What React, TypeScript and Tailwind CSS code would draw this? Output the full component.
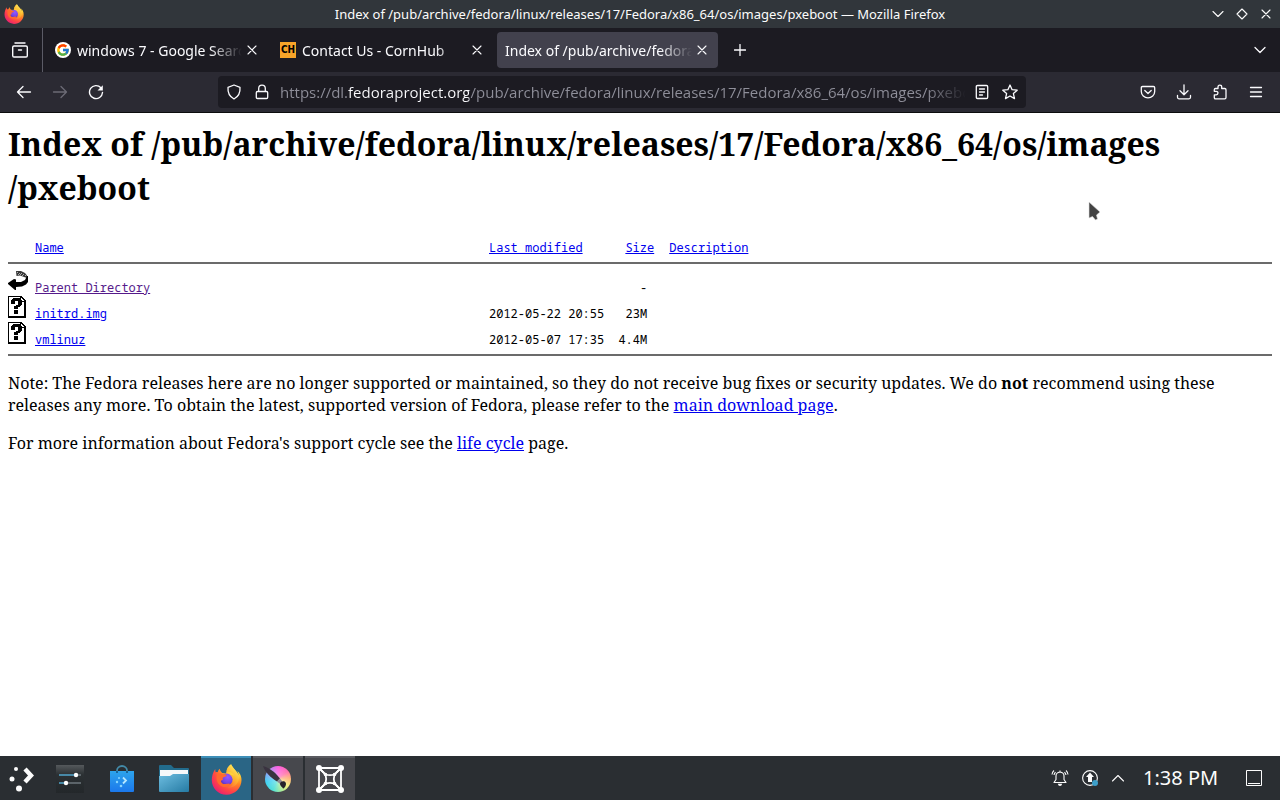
import React from "react";
import { FcGoogle } from "react-icons/fc";

type IconProps = { className?: string };

function Line({ d, size = 16, width = 1.3, className = "" }: { d: string; size?: number; width?: number; className?: string }) {
  return (
    <svg viewBox={`0 0 ${size} ${size}`} width={size} height={size} fill="none" stroke="currentColor" strokeWidth={width} strokeLinecap="round" strokeLinejoin="round" className={`shrink-0 ${className}`} aria-hidden="true">
      <path d={d} />
    </svg>
  );
}

function Firefox({ className = "", id }: IconProps & { id: string }) {
  return (
    <svg viewBox="0 0 32 32" className={`shrink-0 ${className}`} aria-hidden="true">
      <defs>
        <radialGradient id={`${id}-body`} cx="0.82" cy="0.12" r="1.02">
          <stop offset="0" stopColor="#fff44f" />
          <stop offset="0.3" stopColor="#ffcb36" />
          <stop offset="0.52" stopColor="#ff8a24" />
          <stop offset="0.76" stopColor="#ff4545" />
          <stop offset="1" stopColor="#e81e74" />
        </radialGradient>
        <radialGradient id={`${id}-orb`} cx="0.6" cy="0.3" r="0.8">
          <stop offset="0" stopColor="#9059ff" />
          <stop offset="0.6" stopColor="#7542e5" />
          <stop offset="1" stopColor="#4b2aa5" />
        </radialGradient>
        <linearGradient id={`${id}-flame`} x1="0.8" y1="0" x2="0.3" y2="1">
          <stop offset="0" stopColor="#fff36a" />
          <stop offset="0.55" stopColor="#ffb52e" />
          <stop offset="1" stopColor="#ff7139" />
        </linearGradient>
      </defs>
      <path d="M30.3 11.2c-.7-1.7-2.1-3.5-3.2-4.1.9 1.8 1.4 3.5 1.6 4.8C26.9 7.4 23.8 5.6 21.5 1.7c-.4-.6-.6-1.1-.7-1.5-3 1.8-4.5 5-4.8 7.300l-.6 2.200-3.800-.5c-1.300-.7-2.400-2.600-2.500-4.200-.8.6-1.900 2-2.100 3.500-.8-.2-1.500-.2-2.100 0-.3-.5-.5-2.100-.5-3.400C2 8.100.8 13 .8 16.500.8 25 7.600 31.800 16 31.800S31.500 25 31.500 16.600c0-1.900-.5-4-1.200-5.400z" fill={`url(#${id}-body)`} />
      <circle cx="16" cy="16" r="6.300" fill={`url(#${id}-orb)`} />
      <path d="M6.800 10c2-.9 4.500-.5 6 .7 1.500-.2 3 .3 3.300.8-.2 1.600-3.300 1.800-3.900 2.600-.4 1.500.1 2 .1 2.500-2-.3-2.500 1.600-1.500 2.800 1.800 2.200 5.500.8 7.700.6 1.200 0 1.400 1.200.5 1.800-2.500 2.400-6 2.500-9 .6C5.500 19.500 5 14 6.800 10z" fill="#ff6a2d" />
      <path d="M20.800.2c-3 1.800-4.500 5-4.800 7.300 3.500.1 6.700 2 8.200 4.900-1.200-.8-3.200-1.200-4.300-.9 5.100 2.800 4.600 12.200-2.800 12.400 7 1.500 12.400-3.900 11.600-12C26.900 7.400 23.800 5.600 21.500 1.700c-.4-.6-.6-1.100-.7-1.500z" fill={`url(#${id}-flame)`} opacity="0.9" />
    </svg>
  );
}

function BackIcon() {
  return (
    <svg viewBox="0 0 20 22" width="20" height="22" aria-label="parent directory" role="img">
      <path d="M8 1h5l4 2 2 2.500V8l-3-1-4-1.500L8.500 6z" fill="#3a3a3a" />
      <path d="M9 2.500h1M11 3.500h1M10 4.500h1M13 3.500h1M12 4.500h1M15 4.500h1M14 5.500h1M17 5.500h1" stroke="#aaa" shapeRendering="crispEdges" />
      <path d="M20 6v6l-2 2.500-4 2-6 .5v3H7l-7-6v-1l6-4 2 .5V12h5l4-2 2-4z" fill="#000" />
    </svg>
  );
}

function UnknownIcon() {
  return (
    <svg viewBox="0 0 20 22" width="20" height="22" shapeRendering="crispEdges" aria-label="file" role="img">
      <path d="M0 0h13l5 5v17H0z" fill="#000" />
      <path d="M1 1h11v5h4v14H1z" fill="#fff" />
      <path d="M13 2l3 3h-3z" fill="#fff" />
      <path d="M4 3h1V2h7v1h1v1h1v5h-1v1h-1v1h-2v2H6v-3h2V9h2V5H7v3H3V4h1zM6 14h4v4H6z" fill="#000" />
    </svg>
  );
}

function CloseButton({ label }: { label: string }) {
  return (
    <button type="button" aria-label={label} className="flex h-6 w-5 shrink-0 items-center justify-center text-[#fbfbfe]">
      <Line size={10} width={1.1} d="M1 1l8 8M9 1L1 9" />
    </button>
  );
}

function Tab({ title, icon, active = false }: { title: string; icon?: React.ReactNode; active?: boolean }) {
  return (
    <div className={`flex h-9 w-[221px] min-w-0 items-center rounded pr-1.5 pl-2 ${active ? "bg-[#42414d]" : ""}`}>
      <button type="button" role="tab" aria-selected={active} className="flex h-full min-w-0 flex-1 items-center gap-1.5 text-left">
        {icon}
        <span className="min-w-0 flex-1 overflow-hidden whitespace-nowrap [mask-image:linear-gradient(to_left,transparent,black_32px)]">{title}</span>
      </button>
      <CloseButton label={`Close ${title}`} />
    </div>
  );
}

function NavButton({ label, children, className = "" }: { label: string; children: React.ReactNode; className?: string }) {
  return (
    <button type="button" aria-label={label} className={`flex h-8 w-9 shrink-0 items-center justify-center ${className}`}>
      {children}
    </button>
  );
}

function TitleBar() {
  return (
    <header className="flex h-7 items-center bg-[#31363b] text-[13px] text-[#fcfcfc]">
      <div className="flex w-20 pl-1">
        <Firefox id="title" className="h-5 w-5" />
      </div>
      <h2 className="min-w-0 flex-1 truncate text-center leading-7">Index of /pub/archive/fedora/linux/releases/17/Fedora/x86_64/os/images/pxeboot — Mozilla Firefox</h2>
      <div className="flex w-20 justify-end pr-0.5">
        <button type="button" aria-label="Minimize" className="flex w-6 justify-center"><Line size={12} width={1.1} d="M1 3.500l5 5 5-5" /></button>
        <button type="button" aria-label="Maximize" className="flex w-6 justify-center"><Line size={12} width={1.1} d="M6 1l5 5-5 5-5-5z" /></button>
        <button type="button" aria-label="Close window" className="flex w-6 justify-center"><Line size={12} width={1.1} d="M2 2l8 8M10 2l-8 8" /></button>
      </div>
    </header>
  );
}

function TabBar() {
  return (
    <div className="flex h-11 items-center bg-[#1c1b22] text-[14px] text-[#fbfbfe]">
      <div className="mr-1 flex h-full w-[43px] shrink-0 items-center justify-center border-r border-[#5b5b66] pr-0.5">
        <button type="button" aria-label="Firefox View">
          <Line size={18} width={1.4} d="M4 2h10M3 5h12M3 5q-1.300 0-1.300 1.300v8.400Q1.700 16 3 16h12q1.300 0 1.300-1.300V6.300Q16.300 5 15 5M7.500 9h3" />
        </button>
      </div>
      <div role="tablist" className="flex min-w-0 gap-1">
        <Tab title="windows 7 - Google Search" icon={<span className="flex h-4 w-4 shrink-0 items-center justify-center rounded-full bg-white"><FcGoogle className="h-3.5 w-3.5" /></span>} />
        <Tab
          title="Contact Us - CornHub"
          icon={
            <span aria-hidden="true" className="flex h-4 w-4 shrink-0 items-center justify-center bg-[#f7a429] font-['DejaVu_Sans_Condensed','Liberation_Sans',sans-serif] text-[10px] leading-4 font-bold text-black">CH</span>
          }
        />
        <Tab title="Index of /pub/archive/fedora/linux" active />
      </div>
      <button type="button" aria-label="New tab" className="flex h-9 w-[43px] shrink-0 items-center justify-center"><Line size={12} d="M6 0.500v11M0.500 6h11" /></button>
      <button type="button" aria-label="List all tabs" className="ml-auto flex h-9 w-10 shrink-0 items-center justify-center"><Line size={12} d="M1 3.500l5 5 5-5" /></button>
    </div>
  );
}

function NavBar() {
  return (
    <div className="flex h-[41px] items-center border-b border-[#0c0c0d] bg-[#2b2a33] px-1.5 text-[15px] text-[#fbfbfe]">
      <NavButton label="Back"><Line d="M14.500 8h-13M7 2.500L1.500 8 7 13.500" /></NavButton>
      <NavButton label="Forward" className="text-[#6c6b76]"><Line d="M1.500 8h13M9 2.500L14.500 8 9 13.500" /></NavButton>
      <NavButton label="Reload">
        <svg viewBox="0 0 16 16" width="16" height="16" fill="none" stroke="currentColor" strokeWidth="1.400" strokeLinecap="round" aria-hidden="true">
          <path d="M12.900 3.800A6.500 6.500 0 1 0 14.500 8.500" />
          <path d="M14.800 1.200v5.300H9.500z" fill="currentColor" stroke="none" />
        </svg>
      </NavButton>
      <div className="mx-[104px] flex h-8 min-w-0 flex-1 items-center rounded bg-[#1c1b22] px-2">
        <button type="button" aria-label="Tracking protection" className="shrink-0"><Line d="M8 1l6 2.300c.4 5-.8 9-6 11.700C2.800 12.300 1.600 8.300 2 3.300z" /></button>
        <button type="button" aria-label="Connection secure" className="ml-3 shrink-0"><Line d="M3.500 7.500h9q1.200 0 1.200 1.200v4.600q0 1.200-1.200 1.200h-9q-1.200 0-1.200-1.200V8.700q0-1.200 1.200-1.200M4.700 7.500V4.500a3.300 3.300 0 0 1 6.600 0v3" /></button>
        <input
          aria-label="Address"
          type="text"
          defaultValue="https://dl.fedoraproject.org/pub/archive/fedora/linux/releases/17/Fedora/x86_64/os/images/pxeboot/"
          className="ml-2.5 min-w-0 flex-1 bg-[linear-gradient(to_right,#8f8f9a_67px,#fbfbfe_67px,#fbfbfe_189px,#8f8f9a_189px)] bg-clip-text font-['Open_Sans','Noto_Sans',sans-serif] text-transparent outline-none [mask-image:linear-gradient(to_left,transparent,black_40px)]"
        />
        <button type="button" aria-label="Reader view" className="ml-2 shrink-0"><Line d="M3.500 1.500h9q1.200 0 1.200 1.200v10.600q0 1.200-1.200 1.200h-9q-1.200 0-1.200-1.200V2.700q0-1.200 1.200-1.200M5.500 5h5M5.500 8h5M5.500 11h3" /></button>
        <button type="button" aria-label="Bookmark this page" className="ml-3 shrink-0"><Line d="M8 1l2.100 4.700 5.100.5-3.800 3.400 1.100 5L8 12l-4.500 2.600 1.100-5L.8 6.200l5.100-.5z" /></button>
      </div>
      <NavButton label="Save to Pocket"><Line d="M2.500 2.500h11q1.200 0 1.200 1.200V7.500a6.700 6.300 0 0 1-13.400 0V3.700q0-1.200 1.200-1.200M4.800 6.500L8 9.500l3.200-3" /></NavButton>
      <NavButton label="Downloads"><Line d="M8 .8v9.700M4 6.800l4 3.900 4-3.900M1.500 11.500v1.800q0 1.500 1.500 1.500h10q1.500 0 1.500-1.500v-1.800" /></NavButton>
      <NavButton label="Extensions"><Line d="M6 4.500V3a1.800 1.800 0 0 1 3.700 0v1.500h3q1.300 0 1.300 1.300v7.700q0 1.300-1.300 1.300H3.500q-1.200 0-1.200-1.300v-2.700h1.900a1.700 1.700 0 0 0 0-3.500H2.300V5.800q0-1.300 1.200-1.300z" /></NavButton>
      <NavButton label="Menu"><Line d="M2.500 3.500h11M2.500 8h11M2.500 12.500h11" /></NavButton>
    </div>
  );
}

const files = [
  { icon: <BackIcon />, name: "Parent Directory", date: "", size: "-", visited: true },
  { icon: <UnknownIcon />, name: "initrd.img", date: "2012-05-22 20:55", size: "23M", visited: false },
  { icon: <UnknownIcon />, name: "vmlinuz", date: "2012-05-07 17:35", size: "4.4M", visited: false },
];

const link = "text-[#0000ee] underline";

function Page() {
  return (
    <main className="flex-1 bg-white px-2 pt-[9px] pb-6 font-['Noto_Serif','DejaVu_Serif',serif] text-[16px] leading-[22px] text-black">
      <h1 className="text-[32px] leading-[44px] font-bold">
        Index of /pub/archive/fedora/linux/releases/17/Fedora/x86_64/os/images
        <wbr />
        <span className="whitespace-nowrap">/pxeboot</span>
      </h1>
      <table className="mt-6 w-full border-b-2 border-[#6b6b6b] text-left font-['Noto_Sans_Mono','DejaVu_Sans_Mono',monospace] text-[12px] leading-4">
        <thead>
          <tr className="h-[29px] border-b-2 border-[#6b6b6b] align-top">
            <td className="w-[27px]" />
            <th className="w-[454px] pt-1.5 font-normal"><a href="#name" className={link}>Name</a></th>
            <th className="w-[115px] pt-1.5 font-normal whitespace-nowrap"><a href="#modified" className={link}>Last modified</a></th>
            <th className="w-[50px] pt-1.5 text-right font-normal"><a href="#size" className={link}>Size</a></th>
            <th className="pt-1.5 pl-[15px] font-normal"><a href="#description" className={link}>Description</a></th>
          </tr>
        </thead>
        <tbody>
          <tr className="h-[7px]"><td colSpan={5} /></tr>
          {files.map((f) => (
            <tr key={f.name} className="h-[26px] align-bottom">
              <td className="pb-1">{f.icon}</td>
              <td><a href={`#${f.name}`} className={f.visited ? "text-[#551a8b] underline" : link}>{f.name}</a></td>
              <td className="whitespace-nowrap">{f.date}</td>
              <td className="pr-[7px] text-right">{f.size}</td>
              <td />
            </tr>
          ))}
          <tr className="h-[7px]"><td colSpan={5} /></tr>
        </tbody>
      </table>
      <p className="mt-4">
        Note: The Fedora releases here are no longer supported or maintained, so they do not receive bug fixes or security updates. We do <b>not</b> recommend using these releases any more. To obtain the latest, supported version of Fedora, please refer to the <a href="#download" className={link}>main download page</a>.
      </p>
      <p className="mt-4">
        For more information about Fedora's support cycle see the <a href="#lifecycle" className={link}>life cycle</a> page.
      </p>
    </main>
  );
}

function Task({ label, state = "idle", children }: { label: string; state?: "idle" | "open" | "active"; children: React.ReactNode }) {
  const look = {
    idle: "border-transparent",
    open: "border-[#5a5b60] bg-[#47484d]",
    active: "border-[#3d8fb8] bg-[#2a6585]",
  }[state];
  return (
    <button type="button" aria-label={label} className={`flex h-full w-[50px] items-center justify-center border-t-2 ${look}`}>
      {children}
    </button>
  );
}

function Taskbar() {
  return (
    <footer className="flex h-11 items-center bg-[#2a2e32] pr-[17px] text-[#fcfcfc]">
      <button type="button" aria-label="Application launcher" className="flex h-full w-[43px] items-center justify-center">
        <svg viewBox="1 0 26 28" width="26" height="28" aria-hidden="true">
          <g fill="#fcfcfc"><circle cx="8" cy="5" r="2" /><circle cx="4" cy="15" r="2.500" /><circle cx="11" cy="24.500" r="3" /></g>
          <path d="M17 5l6 6.500-6 6.500" fill="none" stroke="#fcfcfc" strokeWidth="4.400" />
        </svg>
      </button>
      <div className="ml-0.5 flex h-full gap-0.5">
        <Task label="System settings">
          <svg viewBox="0 0 28 28" width="28" height="28" aria-hidden="true">
            <defs><linearGradient id="set" x2="0" y2="1"><stop stopColor="#55595c" /><stop offset="0.35" stopColor="#2b3033" /><stop offset="1" stopColor="#23272a" /></linearGradient></defs>
            <path d="M0 0h28v28H0z" fill="url(#set)" />
            <path d="M3 10h16M3 18h6" stroke="#51a5cb" strokeWidth="1.500" /><path d="M20 10h5M9 18h16" stroke="#6d777d" strokeWidth="1.500" />
            <circle cx="20" cy="10" r="2.200" fill="#fff" /><circle cx="10" cy="18" r="2.200" fill="#fff" />
          </svg>
        </Task>
        <Task label="Discover">
          <svg viewBox="0 0 28 28" width="28" height="28" aria-hidden="true">
            <defs><linearGradient id="bag" x2="0" y2="1"><stop stopColor="#2da4ec" /><stop offset="1" stopColor="#1b78ec" /></linearGradient></defs>
            <path d="M9 8V5.500a5 4.500 0 0 1 10 0V8" fill="none" stroke="#438aa8" strokeWidth="1.800" />
            <path d="M2 6h24v20a1 1 0 0 1-1 1H3a1 1 0 0 1-1-1z" fill="url(#bag)" />
            <path d="M9 6v2M19 6v2" stroke="#155f95" strokeWidth="1.800" />
            <path d="M15 12.500l3 3-3 3" fill="none" stroke="#b5e7ff" strokeWidth="1.800" />
            <circle cx="11" cy="13" r="1" fill="#86d4ff" /><circle cx="9" cy="17" r="1.200" fill="#86d4ff" /><circle cx="13" cy="21" r="1.300" fill="#86d4ff" />
          </svg>
        </Task>
        <Task label="Files">
          <svg viewBox="0 0 32 28" width="32" height="28" aria-hidden="true">
            <defs><linearGradient id="folder" x2="1" y2="1"><stop stopColor="#6dbde0" /><stop offset="1" stopColor="#257aa3" /></linearGradient></defs>
            <path d="M1 1q0-1 1-1h11l3 3h14q1 0 1 1v8H1z" fill="#226b8c" />
            <path d="M2 5h28v8H2z" fill="#f5f8fa" />
            <path d="M1 11h11l3-2h16v17q0 1-1 1H2q-1 0-1-1z" fill="url(#folder)" />
          </svg>
        </Task>
        <Task label="Firefox" state="active"><Firefox id="task" className="h-[31px] w-[31px]" /></Task>
        <Task label="Krita" state="open">
          <span className="relative block h-[26px] w-[26px] rounded-full bg-[radial-gradient(circle,#ffffff66,#ffffff00_70%),conic-gradient(#ff5ce0,#ff6fae_50deg,#ffb07a_85deg,#f4ee80_125deg,#a4eb9a_165deg,#4fdfd8_205deg,#3fd0f2_255deg,#8aa2f6_300deg,#ff5ce0)]">
            <svg viewBox="0 0 26 26" className="absolute inset-0 h-full w-full overflow-visible" aria-hidden="true">
              <path d="M-2 0C4 1.500 10 6 15 12.500l-3 3C5.500 11.500 0 6-2 0z" fill="#3a3340" />
              <path d="M12 15.500l3-3 2.600 3.200-2.400 2.300z" fill="#8d8794" />
              <path d="M15 17.500c1-2.500 4.500-3 5.700-.8 1 2.300-.8 4.800-2.700 6 .2-1.500-3.200-2.200-3-5.200z" fill="#26222b" />
            </svg>
          </span>
        </Task>
        <Task label="Xorg" state="open">
          <svg viewBox="0 0 30 30" width="30" height="30" fill="none" stroke="#fff" strokeWidth="1.800" aria-hidden="true">
            <path d="M4 4h22v22H4zM4 4l7 7M26 4l-7 7M4 26l7-7M26 26l-7-7" />
            <path d="M10.500 10.500q4.500 1.400 9 0-1.400 4.500 0 9-4.500-1.400-9 0 1.400-4.500 0-9z" />
            <path d="M4 4q5 3 6 6M4 4q3 5 6 6M26 4q-5 3-6 6M26 4q-3 5-6 6M4 26q5-3 6-6M4 26q3-5 6-6M26 26q-5-3-6-6M26 26q-3-5-6-6" strokeWidth="1" />
            <g fill="#fff" stroke="none"><circle cx="4" cy="4" r="3" /><circle cx="26" cy="4" r="3" /><circle cx="4" cy="26" r="3" /><circle cx="26" cy="26" r="3" /><circle cx="10.500" cy="10.500" r="1.800" /><circle cx="19.500" cy="10.500" r="1.800" /><circle cx="10.500" cy="19.500" r="1.800" /><circle cx="19.500" cy="19.500" r="1.800" /></g>
          </svg>
        </Task>
      </div>
      <div className="ml-auto flex items-center">
        <button type="button" aria-label="Notifications" className="flex w-[30px] justify-center">
          <svg viewBox="0 0 18 18" width="18" height="18" fill="none" stroke="currentColor" strokeWidth="1.100" strokeLinejoin="round" aria-hidden="true">
            <path d="M3 13.500h12l-2-3V7q0-3.500-4-4-4 .5-4 4v3.500zM9 3V1.500M1 5.500Q1.300 3 3 1.500M3 6q.3-1.500 1.500-2.800M17 5.500Q16.700 3 15 1.500M15 6q-.3-1.500-1.500-2.800" />
            <path d="M6.800 14.800h4.400q-.5 2.200-2.200 2.200t-2.200-2.200z" fill="currentColor" stroke="none" />
          </svg>
        </button>
        <button type="button" aria-label="Updates" className="flex w-[30px] justify-center">
          <svg viewBox="0 0 18 18" width="18" height="18" aria-hidden="true">
            <circle cx="9" cy="9" r="7.400" fill="none" stroke="currentColor" strokeWidth="1.100" />
            <path d="M9 3.500l4 4.500h-2v5H7V8H5z" fill="currentColor" />
            <circle cx="14" cy="14" r="3" fill="#3d9fc9" />
          </svg>
        </button>
        <button type="button" aria-label="Show hidden icons" className="flex w-[26px] justify-center"><Line size={14} width={1.1} d="M1.500 10L7 4.500l5.500 5.500" /></button>
        <time className="ml-3 w-[76px] text-xl whitespace-nowrap">1:38 PM</time>
        <button type="button" aria-label="Show desktop" className="ml-6 flex w-5 justify-end">
          <svg viewBox="0 0 18 18" width="18" height="18" fill="none" stroke="currentColor" aria-hidden="true"><path d="M1.500 1.500h15v15h-15zM3 14.500h12" /></svg>
        </button>
      </div>
    </footer>
  );
}

export default function App() {
  return (
    <div className="relative flex min-h-screen flex-col overflow-hidden font-['Noto_Sans',sans-serif]">
      <TitleBar />
      <TabBar />
      <NavBar />
      <Page />
      <Taskbar />
      <svg viewBox="0 0 13 20" aria-hidden="true" className="pointer-events-none absolute top-[201px] left-[1088px] h-5 w-[13px]">
        <path d="M1 1v16l3.500-1.500L7.500 19l2-1-1-4L12 11z" fill="#434343" stroke="#dedede" strokeWidth="0.600" />
      </svg>
    </div>
  );
}
